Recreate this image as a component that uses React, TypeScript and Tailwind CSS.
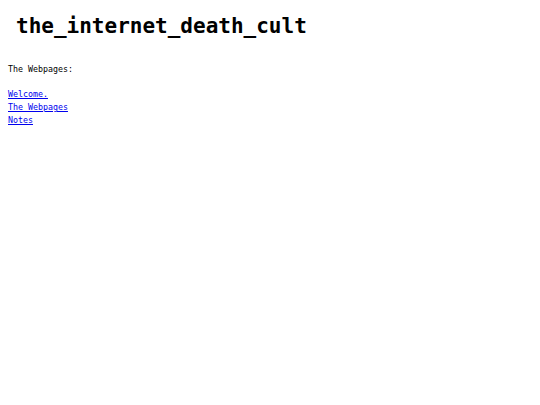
export default function App() {
  return (
    <div className="min-h-screen bg-white text-black p-2 font-['DejaVu_Sans_Mono',monospace]">
      <h1 className="ml-2 mt-[4px] text-[21px] leading-[28px] font-bold">the_internet_death_cult</h1>
      <div className="mt-[23px] text-[8.3px] leading-[12.7px]">
        <p>The Webpages:</p>
        <p>&nbsp;</p>
        <a href="#" className="block text-[#0000ee] underline">Welcome.</a>
        <a href="#" className="block text-[#0000ee] underline">The Webpages</a>
        <a href="#" className="block text-[#0000ee] underline">Notes</a>
      </div>
    </div>
  );
}
